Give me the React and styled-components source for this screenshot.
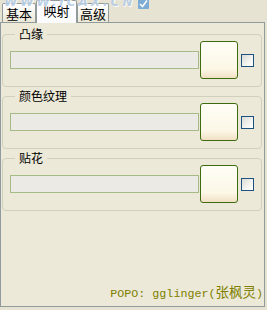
import styled, { createGlobalStyle } from 'styled-components';

const Global = createGlobalStyle`
    html, body {
        margin: 0;
        padding: 0;
        background: #ece9d8;
    }
    body {
        font-family: "Noto Sans CJK SC", "DejaVu Sans", sans-serif;
    }
`;

const Window = styled.div`
    position: relative;
    width: 267px;
    height: 310px;
    overflow: hidden;
    background: #e6e3d3;
`;

const TabRow = styled.div`
    display: flex;
    align-items: flex-end;
    height: 22px;
    padding-left: 2px;
    position: relative;
    z-index: 1;
`;

const Tab = styled.div`
    box-sizing: border-box;
    display: flex;
    align-items: center;
    justify-content: center;
    width: ${p => p.$w}px;
    height: ${p => (p.$active ? 23 : 19)}px;
    margin-bottom: ${p => (p.$active ? -1 : 0)}px;
    padding-bottom: ${p => (p.$active ? 3 : 0)}px;
    border: 1px solid #919b9c;
    border-bottom: none;
    border-radius: 2px 2px 0 0;
    background: ${p => (p.$active ? '#fcfcfe' : 'linear-gradient(#fefefe, #ece9d8)')};
    font-size: 13px;
    line-height: 15px;
    color: #000;
`;

const Panel = styled.div`
    box-sizing: border-box;
    display: flex;
    flex-direction: column;
    width: 265px;
    height: 285px;
    border: 1px solid #919b9c;
    background: #ece9d8;
    padding: 4px 2px 0 1px;
`;

const Group = styled.fieldset`
    box-sizing: border-box;
    flex-shrink: 0;
    margin: 0 0 2px;
    padding: 0 6px 0 7px;
    border: 1px solid #d0d0bf;
    border-radius: 4px;
    min-width: 0;
`;

const Legend = styled.legend`
    margin-left: 5px;
    padding: 0 4px;
    font-size: 12px;
    line-height: 14px;
    color: #000;
`;

const Row = styled.div`
    display: flex;
    align-items: center;
    height: 38px;
    padding: 0 0 7px;
`;

const Field = styled.div`
    box-sizing: border-box;
    width: 189px;
    height: 18px;
    border: 1px solid #a5bb86;
    background: #ebeae5;
`;

const ColorButton = styled.div`
    box-sizing: border-box;
    width: 38px;
    height: 38px;
    margin-left: 1px;
    border: 1px solid #3d6b0d;
    border-radius: 3px;
    background: linear-gradient(#fffef6 0%, #fcf7e6 75%, #f1e0c4 100%);
`;

const Check = styled.div`
    box-sizing: border-box;
    width: 13px;
    height: 13px;
    margin-left: 3px;
    border: 1px solid #1c5180;
    background: linear-gradient(135deg, #dcdcd6 0%, #f4f4f0 60%, #ffffff 100%);
`;

const Footer = styled.div`
    margin-top: auto;
    margin-right: -1px;
    padding-bottom: 4px;
    text-align: right;
    font-family: "Liberation Mono", "Noto Sans CJK SC", monospace;
    font-size: 11.7px;
    line-height: 16px;
    color: #808000;
    white-space: nowrap;

    span {
        font-family: "Noto Sans CJK SC", sans-serif;
        font-size: 13.5px;
    }
`;

const Watermark = styled.div`
    position: absolute;
    top: -6px;
    left: 4px;
    display: flex;
    align-items: center;
    gap: 3px;
    font-family: "DejaVu Sans", sans-serif;
    font-style: italic;
    font-weight: bold;
    font-size: 12px;
    letter-spacing: 3px;
    color: #b3cbe3;
    text-shadow: 0 0 1px #fff, 1px 1px 0 #fff;
    opacity: 0.85;
    pointer-events: none;
    z-index: 2;

    svg {
        margin-top: 4px;
    }
`;

const groups = ['凸缘', '颜色纹理', '贴花'];

function App() {
    return (
        <>
            <Global />
            <Window>
                <Watermark>
                    WWW.ICAX.CN
                    <svg width="11" height="11" viewBox="0 0 11 11">
                        <rect width="11" height="11" rx="1" fill="#6aa3d6" />
                        <path d="M2 6 L4.5 8.5 L9 2.5" stroke="#fff" strokeWidth="1.6" fill="none" />
                    </svg>
                </Watermark>
                <TabRow>
                    <Tab $w={34}>基本</Tab>
                    <Tab $w={41} $active>映射</Tab>
                    <Tab $w={32}>高级</Tab>
                </TabRow>
                <Panel>
                    {groups.map(name => (
                        <Group key={name}>
                            <Legend>{name}</Legend>
                            <Row>
                                <Field />
                                <ColorButton />
                                <Check />
                            </Row>
                        </Group>
                    ))}
                    <Footer>
                        POPO: gglinger(<span>张枫灵</span>)
                    </Footer>
                </Panel>
            </Window>
        </>
    );
}

export default App;
